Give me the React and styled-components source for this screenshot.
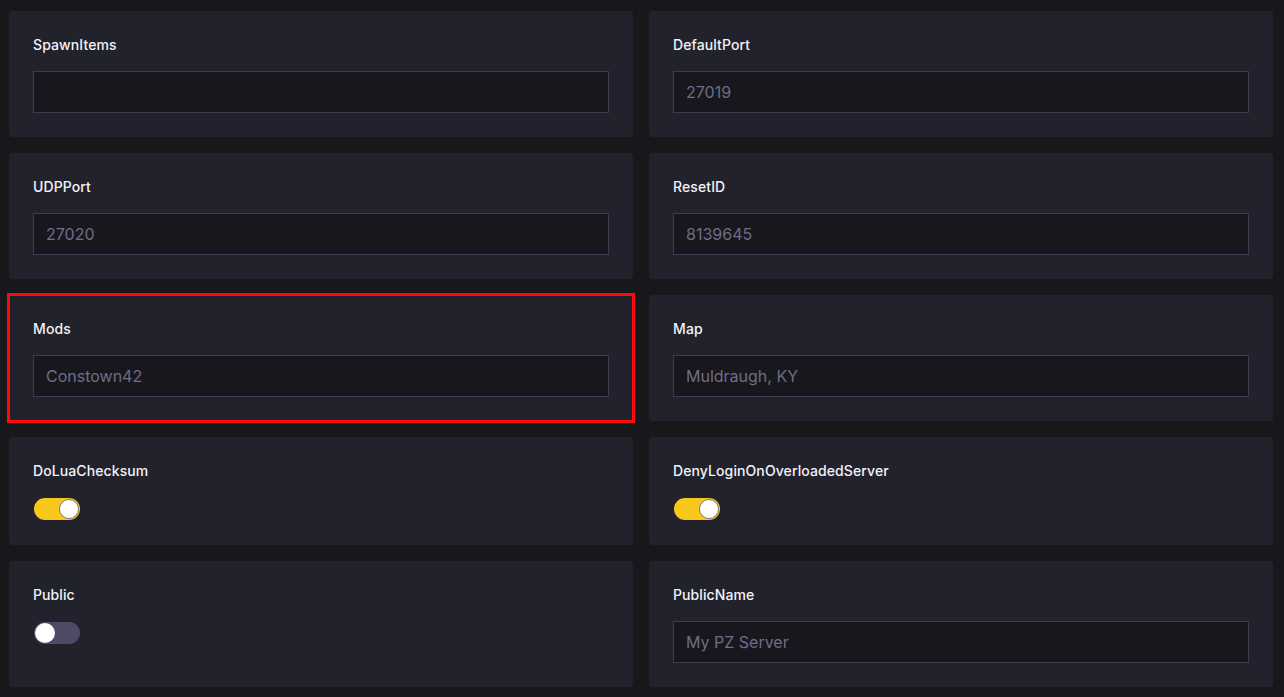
import styled, { createGlobalStyle } from "styled-components";

const Global = createGlobalStyle`
  html, body {
    margin: 0;
    padding: 0;
    background: #17171c;
  }
  * { box-sizing: border-box; }
`;

const Page = styled.div`
  display: grid;
  grid-template-columns: 624px 624px;
  column-gap: 16px;
  row-gap: 16px;
  padding: 11px 11px 10px 9px;
  font-family: Inter, "Noto Sans", sans-serif;
`;

const Card = styled.div`
  background: #22222c;
  border-radius: ${(p) => (p.highlight ? "0" : "4px")};
  padding: 24px;
  display: flex;
  flex-direction: column;
  align-items: flex-start;
  gap: 16px;
  outline: ${(p) => (p.highlight ? "3px solid #ff0a0a" : "none")};
  outline-offset: -1px;
`;

const Label = styled.div`
  color: #f2f2f7;
  font-size: 14px;
  font-weight: 500;
  line-height: 20px;
  letter-spacing: 0.1px;
`;

const Input = styled.input`
  width: 100%;
  height: 42px;
  background: #17171d;
  border: 1px solid #3e3c52;
  border-radius: 0;
  padding: 0 12px;
  color: #6f6d87;
  font-family: Inter, "Noto Sans", sans-serif;
  font-size: 16px;
  outline: none;
`;

const Switch = styled.div`
  width: 48px;
  height: 24px;
  padding: 1px;
  display: flex;
  align-items: center;
`;

const Track = styled.div`
  width: 46px;
  height: 22px;
  border-radius: 11px;
  background: ${(p) => (p.on ? "#f7c81b" : "#4c4a66")};
  display: flex;
  align-items: center;
  justify-content: ${(p) => (p.on ? "flex-end" : "flex-start")};
  padding: 0 1px;
`;

const Knob = styled.div`
  width: 20px;
  height: 20px;
  border-radius: 50%;
  background: #ffffff;
  border: ${(p) => (p.on ? "1px solid #7b7a92" : "none")};
`;

const Toggle = ({ on }) => (
  <Switch>
    <Track on={on}>
      <Knob on={on} />
    </Track>
  </Switch>
);

const fields = [
  { label: "SpawnItems", value: "" },
  { label: "DefaultPort", value: "27019" },
  { label: "UDPPort", value: "27020" },
  { label: "ResetID", value: "8139645" },
  { label: "Mods", value: "Constown42", highlight: true },
  { label: "Map", value: "Muldraugh, KY" },
  { label: "DoLuaChecksum", toggle: true, on: true },
  { label: "DenyLoginOnOverloadedServer", toggle: true, on: true },
  { label: "Public", toggle: true, on: false },
  { label: "PublicName", value: "My PZ Server" },
];

export default function App() {
  return (
    <>
      <Global />
      <Page>
        {fields.map((f) => (
          <Card key={f.label} highlight={f.highlight}>
            <Label>{f.label}</Label>
            {f.toggle ? (
              <Toggle on={f.on} />
            ) : (
              <Input defaultValue={f.value} />
            )}
          </Card>
        ))}
      </Page>
    </>
  );
}
